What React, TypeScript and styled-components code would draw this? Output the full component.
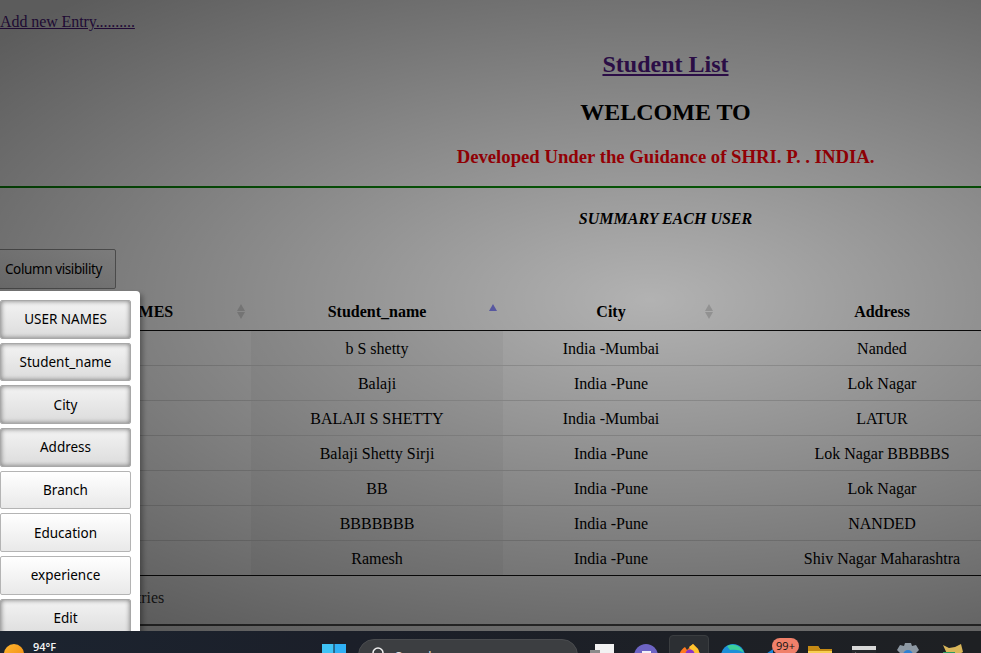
import styled, { createGlobalStyle } from "styled-components";

interface StudentRow {
  id: number;
  student: string;
  city: string;
  address: string;
}

const ROWS: StudentRow[] = [
  { id: 1, student: "b S shetty", city: "India -Mumbai", address: "Nanded" },
  { id: 2, student: "Balaji", city: "India -Pune", address: "Lok Nagar" },
  { id: 3, student: "BALAJI S SHETTY", city: "India -Mumbai", address: "LATUR" },
  { id: 4, student: "Balaji Shetty Sirji", city: "India -Pune", address: "Lok Nagar BBBBBS" },
  { id: 5, student: "BB", city: "India -Pune", address: "Lok Nagar" },
  { id: 6, student: "BBBBBBB", city: "India -Pune", address: "NANDED" },
  { id: 7, student: "Ramesh", city: "India -Pune", address: "Shiv Nagar Maharashtra" },
];

const COLUMNS: { label: string; active: boolean }[] = [
  { label: "USER NAMES", active: true },
  { label: "Student_name", active: true },
  { label: "City", active: true },
  { label: "Address", active: true },
  { label: "Branch", active: false },
  { label: "Education", active: false },
  { label: "experience", active: false },
  { label: "Edit", active: true },
];

const GlobalStyle = createGlobalStyle`
  html, body {
    margin: 0;
    height: 100%;
    overflow: hidden;
    background: #fff;
  }
`;

const Screen = styled.div`
  width: 981px;
  height: 653px;
  display: flex;
  flex-direction: column;
  overflow: hidden;
`;

const Main = styled.main`
  position: relative;
  height: 631px;
  flex-shrink: 0;
  overflow: hidden;
  font-family: "Liberation Serif", "Times New Roman", serif;
  font-size: 16px;
  color: #000;
  padding-top: 13px;
  box-sizing: border-box;
`;

const Overlay = styled.div`
  position: absolute;
  inset: 0;
  z-index: 1;
  background: radial-gradient(
    ellipse 860px 400px at 650px 300px,
    rgba(0, 0, 0, 0.3) 0%,
    rgba(0, 0, 0, 0.64) 100%
  );
`;

const AddLink = styled.a`
  display: block;
  color: #551a8b;
  text-decoration: underline;
  line-height: 18px;
  letter-spacing: -0.08px;
`;

const Centered = styled.div`
  width: 100%;
  padding-left: 350px;
  box-sizing: border-box;
  text-align: center;
`;

const ListTitle = styled.h2`
  margin: 20px 0 0;
  font-size: 24px;
  line-height: 27px;
  color: #551a8b;
  text-decoration: underline;
`;

const Welcome = styled.h2`
  margin: 21px 0 0;
  font-size: 24px;
  line-height: 27px;
`;

const Guidance = styled.h3`
  margin: 20px 0 0;
  font-size: 18.72px;
  line-height: 21px;
  color: #ff0008;
`;

const Rule = styled.hr`
  margin: 19px 0 0;
  border: 0;
  height: 2px;
  background: #0a8a0a;
`;

const Summary = styled.h4`
  margin: 22px 0 0;
  font-size: 16px;
  line-height: 18px;
  font-style: italic;
`;

const Wrapper = styled.div`
  margin-left: -9px;
  width: 1054px;
`;

const DtButton = styled.button`
  display: block;
  margin: 21px 0 0;
  width: 125px;
  height: 40px;
  padding: 0;
  font-family: "Noto Sans", Arial, sans-serif;
  font-size: 13.5px;
  letter-spacing: -0.4px;
  color: #000;
  border: 1px solid #999;
  border-radius: 2px;
  background: linear-gradient(to bottom, #fff 0%, #e9e9e9 100%);
  text-align: center;
`;

const Table = styled.table`
  margin-top: 3px;
  width: 1054px;
  table-layout: fixed;
  border-collapse: separate;
  border-spacing: 0;
  border-bottom: 1px solid #111;
`;

const HeadCell = styled.th`
  position: relative;
  height: 36px;
  padding: 2px 0 0;
  border-bottom: 1px solid #111;
  font-size: 16px;
  text-align: center;
`;

const Cell = styled.td<{ $sorted?: boolean; $first?: boolean }>`
  height: 32px;
  padding: 2px 0 0;
  text-align: center;
  background: ${({ $sorted }) => ($sorted ? "#f5f5f5" : "transparent")};
  border-top: ${({ $first }) => ($first ? "0" : "1px solid #ddd")};
`;

const SortIcon = styled.span`
  position: absolute;
  right: 6px;
  top: 12px;
  display: flex;
  flex-direction: column;
  gap: 1px;
`;

const Arrow = styled.i<{ $down?: boolean; $on?: boolean }>`
  display: block;
  width: 0;
  height: 0;
  border-left: 4px solid transparent;
  border-right: 4px solid transparent;
  ${({ $down }) => ($down ? "border-top" : "border-bottom")}: 7px solid
    ${({ $on }) => ($on ? "#8989fb" : "#d8d8d8")};
`;

const Info = styled.div`
  margin: 8px 0 0;
  line-height: 18px;
  padding: 5px 0;
  color: #333;
`;

const BottomRule = styled.hr`
  margin: 12px 0 0;
  border: 0;
  border-top: 2px solid #555;
  height: 0;
`;

const Collection = styled.div`
  position: absolute;
  z-index: 2;
  left: -9px;
  top: 291px;
  width: 149px;
  box-sizing: border-box;
  padding: 9px 9px 0;
  height: 360px;
  display: flex;
  flex-direction: column;
  gap: 4px;
  background: #fff;
  border-radius: 4px;
  box-shadow: 3px 3px 5px rgba(0, 0, 0, 0.3);
`;

const ColumnToggle = styled.button<{ $active: boolean }>`
  flex: 0 0 38.7px;
  padding: 0;
  font-family: "Noto Sans", Arial, sans-serif;
  font-size: 13.5px;
  color: #000;
  border: 1px solid ${({ $active }) => ($active ? "#a8a8a8" : "#b4b4b4")};
  border-radius: 2px;
  background: ${({ $active }) =>
    $active
      ? "linear-gradient(to bottom, #f3f3f3 0%, #dcdcdc 100%)"
      : "linear-gradient(to bottom, #fff 0%, #e9e9e9 100%)"};
  box-shadow: ${({ $active }) => ($active ? "inset 0 0 5px #777" : "none")};
`;

const Taskbar = styled.footer`
  position: relative;
  height: 22px;
  flex-shrink: 0;
  display: flex;
  overflow: hidden;
  background: linear-gradient(to right, #1c2430 0%, #1b1f29 35%, #1d2026 70%, #1e2023 100%);
`;

const Weather = styled.div`
  width: 322px;
  flex-shrink: 0;
  display: flex;
  padding-left: 4px;
  box-sizing: border-box;
`;

const Sun = styled.span`
  flex-shrink: 0;
  width: 20px;
  height: 20px;
  margin-top: 13px;
  border-radius: 50%;
  background: linear-gradient(135deg, #ffb52e, #f08a12);
`;

const Temp = styled.span`
  margin: 9px 0 0 9px;
  font-family: "Open Sans", "Liberation Sans", sans-serif;
  font-size: 11px;
  font-weight: 600;
  line-height: 14px;
  color: #f4f4f4;
`;

const StartLogo = styled.svg`
  flex-shrink: 0;
  width: 24px;
  height: 24px;
  margin-top: 13px;
`;

const SearchBox = styled.div`
  flex-shrink: 0;
  width: 220px;
  height: 32px;
  margin: 8px 0 0 12px;
  padding: 6px 0 0 12px;
  box-sizing: border-box;
  display: flex;
  gap: 8px;
  background: #3c3e41;
  border-radius: 16px;
  border: 1px solid #4a4c4f;
`;

const SearchLabel = styled.span`
  margin-top: 3px;
  font-family: "Open Sans", "Liberation Sans", sans-serif;
  font-size: 13px;
  line-height: 14px;
  color: #e4e4e4;
`;

const TrayIcon = styled.svg<{ $left: number; $top?: number }>`
  flex-shrink: 0;
  width: 24px;
  height: 24px;
  margin-left: ${({ $left }) => $left}px;
  margin-top: ${({ $top }) => $top ?? 13}px;
`;

const HoverTile = styled.div`
  flex-shrink: 0;
  width: 40px;
  height: 30px;
  margin: 4px 0 0 11px;
  padding: 8px 0 0 8px;
  box-sizing: border-box;
  background: #2c2f33;
  border: 1px solid #3a3d40;
  border-radius: 4px;
`;

const MailSlot = styled.div`
  position: relative;
  flex-shrink: 0;
  width: 24px;
  height: 24px;
  margin: 13px 0 0 18px;
`;

const Badge = styled.span`
  position: absolute;
  left: 9px;
  top: -6px;
  width: 27px;
  height: 16px;
  border-radius: 8px;
  background: #f0806a;
  color: #111;
  font-family: "Open Sans", "Liberation Sans", sans-serif;
  font-size: 11px;
  line-height: 16px;
  text-align: center;
`;

export default function App() {
  return (
    <>
      <GlobalStyle />
      <Screen>
        <Main>
          <AddLink href="#add">Add new Entry..........</AddLink>
          <Centered>
            <ListTitle>Student List</ListTitle>
            <Welcome>WELCOME TO</Welcome>
            <Guidance>Developed Under the Guidance of SHRI. P. . INDIA.</Guidance>
          </Centered>
          <Rule />
          <Centered>
            <Summary>SUMMARY EACH USER</Summary>
          </Centered>
          <Wrapper>
            <DtButton>Column visibility</DtButton>
            <Table>
              <colgroup>
                <col width={260} />
                <col width={252} />
                <col width={216} />
                <col width={326} />
              </colgroup>
              <thead>
                <tr>
                  <HeadCell>
                    USER NAMES
                    <SortIcon>
                      <Arrow />
                      <Arrow $down />
                    </SortIcon>
                  </HeadCell>
                  <HeadCell>
                    Student_name
                    <SortIcon>
                      <Arrow $on />
                    </SortIcon>
                  </HeadCell>
                  <HeadCell>
                    City
                    <SortIcon>
                      <Arrow />
                      <Arrow $down />
                    </SortIcon>
                  </HeadCell>
                  <HeadCell>Address</HeadCell>
                </tr>
              </thead>
              <tbody>
                {ROWS.map((row, i) => (
                  <tr key={row.id}>
                    <Cell $first={i === 0} />
                    <Cell $first={i === 0} $sorted>
                      {row.student}
                    </Cell>
                    <Cell $first={i === 0}>{row.city}</Cell>
                    <Cell $first={i === 0}>{row.address}</Cell>
                  </tr>
                ))}
              </tbody>
            </Table>
            <Info>Showing 1 to 7 of 7 entries</Info>
            <BottomRule />
          </Wrapper>
          <Overlay />
          <Collection>
            {COLUMNS.map((c) => (
              <ColumnToggle key={c.label} $active={c.active}>
                {c.label}
              </ColumnToggle>
            ))}
          </Collection>
        </Main>
        <Taskbar>
          <Weather>
            <Sun />
            <Temp>94°F</Temp>
          </Weather>
          <StartLogo viewBox="0 0 24 24">
            <rect x="0" y="0" width="11.5" height="11.5" fill="#3fc3f5" />
            <rect x="12.5" y="0" width="11.5" height="11.5" fill="#2fb0f5" />
            <rect x="0" y="12.5" width="11.5" height="11.5" fill="#2fa8ef" />
            <rect x="12.5" y="12.5" width="11.5" height="11.5" fill="#1f90e6" />
          </StartLogo>
          <SearchBox>
            <svg width="16" height="16" viewBox="0 0 16 16" fill="none" stroke="#eee" strokeWidth="1.6">
              <circle cx="7" cy="7" r="5" />
              <path d="M11 11l4 4" />
            </svg>
            <SearchLabel>Search</SearchLabel>
          </SearchBox>
          <TrayIcon $left={12} viewBox="0 0 24 24">
            <rect x="5" y="0" width="19" height="22" fill="#f2f2f2" />
            <rect x="0" y="6" width="10" height="12" fill="#8a8a8a" />
          </TrayIcon>
          <TrayIcon $left={20} viewBox="0 0 24 24">
            <circle cx="12" cy="12" r="12" fill="#6d64c4" />
            <rect x="8" y="7" width="9" height="9" fill="#f0f0f8" />
          </TrayIcon>
          <HoverTile>
            <svg width="24" height="24" viewBox="0 0 24 24">
              <path d="M1 14C1 8 4 5 7 3l2 3 6-6 5 5 3 8c0 6-5 11-11 11S1 20 1 14z" fill="#ff7a1f" />
              <path d="M11 3L15 0l5 5 3 8-7-3z" fill="#ffc52e" />
              <circle cx="12" cy="10" r="4.5" fill="#8a35c9" />
            </svg>
          </HoverTile>
          <TrayIcon $left={12} viewBox="0 0 24 24">
            <circle cx="12" cy="12" r="12" fill="#1d8fd8" />
            <path d="M6 2C12-1 20 1 23 9c-3-3-9-4-14-3z" fill="#3ccf9a" />
          </TrayIcon>
          <MailSlot>
            <svg width="24" height="24" viewBox="0 0 24 24">
              <path d="M0 12L10 5v19H0z" fill="#1a86d8" />
            </svg>
            <Badge>99+</Badge>
          </MailSlot>
          <TrayIcon $left={21} viewBox="0 0 24 24">
            <path d="M0 2h10l2 3h12v19H0z" fill="#f7cf52" />
            <path d="M0 2h10l2 3h12v2H0z" fill="#c58a14" />
          </TrayIcon>
          <TrayIcon $left={20} $top={15} viewBox="0 0 24 24">
            <rect width="24" height="22" fill="#d8d8d8" />
            <rect y="4" width="24" height="20" fill="#26282b" />
            <path d="M3 7l4 3" stroke="#eee" strokeWidth="1.5" />
          </TrayIcon>
          <TrayIcon $left={20} $top={12} viewBox="0 0 24 24">
            <path d="M9 0h6l1 3 4-1 3 5-3 3v6H4v-6L1 7l3-5 4 1z" fill="#8d98a3" />
            <circle cx="12" cy="12" r="5" fill="#2f7fd0" />
          </TrayIcon>
          <TrayIcon $left={20} $top={11} viewBox="0 0 24 24">
            <path d="M3 3l6 3 6-1 6-3 2 8-7 4-8 0z" fill="#d9b65a" />
            <path d="M3 10h12v14H3z" fill="#2f9a5c" />
          </TrayIcon>
        </Taskbar>
      </Screen>
    </>
  );
}
